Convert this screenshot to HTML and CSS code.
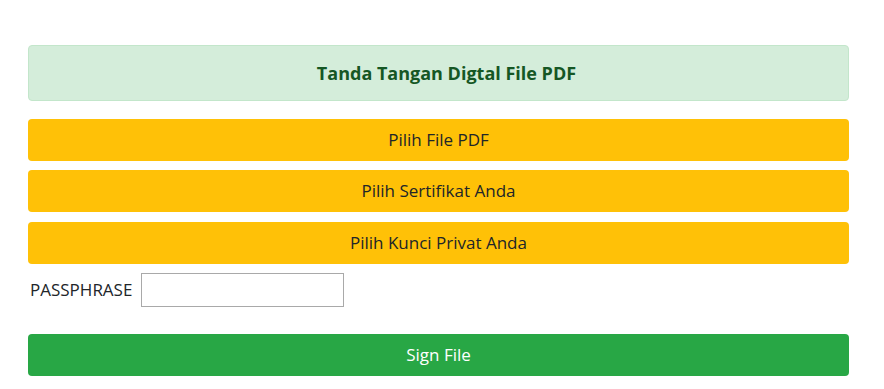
FILE: index.html
```html
<!DOCTYPE html>
<html lang="en">
<head>
    <meta charset="UTF-8">
    <meta name="viewport" content="width=device-width, initial-scale=1.0">
    <title>Tanda Tangan Digital</title>
    <link rel="stylesheet" href="styles.css">
</head>
<body>
    <div class="container">
        <div class="alert">Tanda Tangan Digtal File PDF</div>

        <div class="actions">
            <button class="btn btn-warning">Pilih File PDF</button>
            <button class="btn btn-warning">Pilih Sertifikat Anda</button>
            <button class="btn btn-warning">Pilih Kunci Privat Anda</button>
        </div>

        <div class="pass-row">
            <label for="passphrase">PASSPHRASE</label>
            <input type="password" id="passphrase">
        </div>

        <button class="btn btn-success">Sign File</button>
    </div>
</body>
</html>
```

FILE: styles.css
```css
* {
    margin: 0;
    padding: 0;
    box-sizing: border-box;
}

body {
    font-family: 'Open Sans', 'Noto Sans', sans-serif;
    font-size: 17px;
    color: #212529;
    background: #fff;
}

.container {
    padding: 45px 35px 0 28px;
}

.alert {
    background: #d4edda;
    border: 1px solid #c3e6cb;
    border-radius: 4px;
    color: #155724;
    font-size: 18px;
    font-weight: 700;
    text-align: center;
    padding: 14px 20px 14px 36px;
    line-height: 26px;
    height: 56px;
    margin-bottom: 18px;
}

.actions {
    display: flex;
    flex-direction: column;
    gap: 9.3px;
}

.btn {
    display: block;
    width: 100%;
    border: none;
    border-radius: 4px;
    height: 42px;
    font-family: inherit;
    font-size: 17px;
    line-height: 24px;
    cursor: pointer;
}

.btn-warning {
    background: #ffc107;
    color: #212529;
}

.btn-success {
    background: #28a745;
    color: #fff;
}

.pass-row {
    display: flex;
    align-items: center;
    gap: 9px;
    margin: 9.3px 0 27px 2px;
}

.pass-row label {
    font-size: 17px;
}

.pass-row input {
    width: 203px;
    height: 34px;
    border: 1px solid #a9a9a9;
    font-size: 16px;
    padding: 2px 6px;
}
```
